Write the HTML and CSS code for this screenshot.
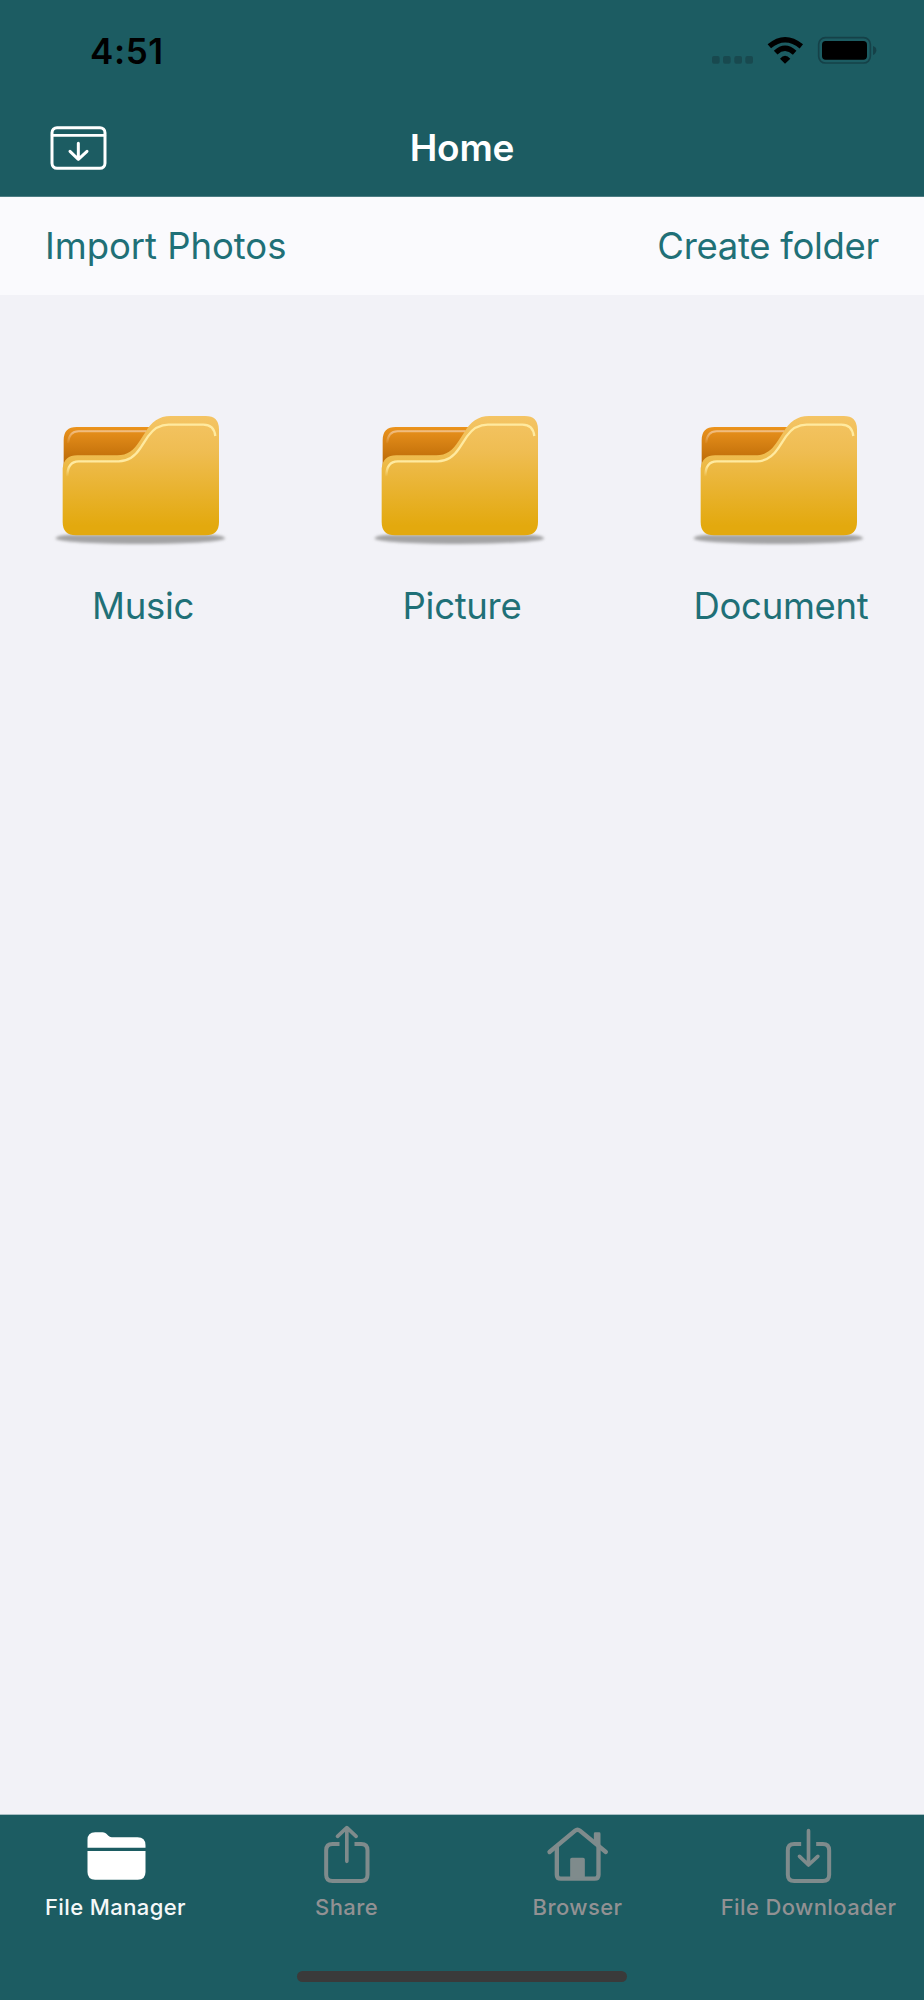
FILE: index.html
```html
<!DOCTYPE html>
<html lang="en">
<head>
<meta charset="UTF-8" />
<title>Home</title>
<link rel="stylesheet" href="styles.css">
</head>
<body>

<header>
  <div class="status">
    <span class="time">4:51</span>
    <svg class="status-icons" viewBox="0 0 510 90">
      <g fill="#18494f">
        <rect x="15" y="63" width="23" height="23" rx="6"/>
        <rect x="48" y="63" width="23" height="23" rx="6"/>
        <rect x="82" y="63" width="23" height="23" rx="6"/>
        <rect x="115" y="63" width="23" height="23" rx="6"/>
      </g>
      <g fill="none" stroke="#000" stroke-width="16">
        <path d="M187 34Q234 -6 283 34"/>
        <path d="M206 53Q234 27 263 53"/>
      </g>
      <path d="M219 71Q234 53 250 71L234 86Z"/>
      <rect x="335" y="8" width="155" height="76" rx="20" fill="none" stroke="#154148" stroke-width="5"/>
      <rect x="345" y="18" width="135" height="56" rx="11"/>
      <path d="M498 33Q508 36 508 46Q508 56 498 60Z" fill="#154148"/>
    </svg>
  </div>
  <div class="nav">
    <svg class="nav-icon" viewBox="0 0 180 140" fill="none" stroke="#fff" stroke-width="9" stroke-linecap="round" stroke-linejoin="round">
      <rect x="12" y="8" width="159" height="122" rx="15"/>
      <path d="M13 31H170" stroke-width="8"/>
      <path d="M91 55V103M66 79L91 103L117 79"/>
    </svg>
    <h1>Home</h1>
  </div>
</header>

<div class="toolbar">
  <a class="import">Import Photos</a>
  <a class="create">Create folder</a>
</div>

<main>
  <svg width="0" height="0" class="defs">
    <defs>
      <linearGradient id="front" x1="0" y1="0" x2="0" y2="1">
        <stop offset="0" stop-color="#f4c464"/>
        <stop offset="0.3" stop-color="#efbd52"/>
        <stop offset="0.92" stop-color="#e3a90e"/>
        <stop offset="1" stop-color="#e3a90e"/>
      </linearGradient>
      <linearGradient id="back" gradientUnits="userSpaceOnUse" x1="0" y1="80" x2="0" y2="190">
        <stop offset="0" stop-color="#ec941c"/>
        <stop offset="0.25" stop-color="#df8918"/>
        <stop offset="0.8" stop-color="#c5720b"/>
        <stop offset="1" stop-color="#bd6b06"/>
      </linearGradient>
      <linearGradient id="shine" gradientUnits="userSpaceOnUse" x1="0" y1="180" x2="0" y2="230">
        <stop offset="0" stop-color="#ffeaa0"/>
        <stop offset="0.35" stop-color="#ffeaa0"/>
        <stop offset="1" stop-color="#ffeaa0" stop-opacity="0"/>
      </linearGradient>
      <linearGradient id="back-shine" gradientUnits="userSpaceOnUse" x1="0" y1="92" x2="0" y2="132">
        <stop offset="0" stop-color="#f1bf85"/>
        <stop offset="1" stop-color="#f1bf85" stop-opacity="0"/>
      </linearGradient>
      <filter id="soft" x="-10%" y="-60%" width="120%" height="220%">
        <feGaussianBlur stdDeviation="4"/>
      </filter>
      <g id="folder">
        <path d="M46 416Q48 406 90 404H510Q554 406 556 416Q530 430 300 432Q70 430 46 416Z" fill="#a3a3a4" filter="url(#soft)"/>
        <path d="M71 200V120Q71 81 110 81H345L330 180H110Z" fill="url(#back)"/>
        <path d="M84 130Q87 94 116 94H320" fill="none" stroke="url(#back-shine)" stroke-width="6"/>
        <path d="M68 205Q72 166 112 166H232C262 166 281 151 299 123L317 95C334 66 357 48 392 48H497Q537 48 537 88V366Q537 406 497 406H108Q68 406 68 366Z" fill="url(#front)"/>
        <path d="M82 230Q82 184 116 184H236C264 184 286 168 302 143L324 109C342 84 360 74 386 74H490Q522 74 526 108" fill="none" stroke="url(#shine)" stroke-width="7"/>
      </g>
    </defs>
  </svg>
  <ul class="folders">
    <li>
      <svg viewBox="9 0 600 450"><use href="#folder"/></svg>
      <span>Music</span>
    </li>
    <li>
      <svg viewBox="9 0 600 450"><use href="#folder"/></svg>
      <span>Picture</span>
    </li>
    <li>
      <svg viewBox="9 0 600 450"><use href="#folder"/></svg>
      <span>Document</span>
    </li>
  </ul>
</main>

<footer>
  <ul class="tabs">
    <li class="active">
      <svg viewBox="226.5 60 240 210" fill="#fff">
        <path d="M261 143V120Q261 97 284 97H306C319 97 323 112 334 112H411Q435 112 435 136V143Z"/>
        <path d="M261 153H435V216Q435 239 412 239H284Q261 239 261 216Z"/>
      </svg>
      <span>File Manager</span>
    </li>
    <li>
      <svg viewBox="199.5 60 240 210" fill="none" stroke="#7f8b8c" stroke-width="12">
        <path d="M297 132H276Q257 132 257 151V224Q257 243 276 243H362Q381 243 381 224V151Q381 132 362 132H342"/>
        <path d="M319 184V84M291 109L319 83L347 109" stroke-linecap="round" stroke-linejoin="round" stroke-width="11"/>
      </svg>
      <span>Share</span>
    </li>
    <li>
      <svg viewBox="172.5 60 240 210" fill="none" stroke="#7f8b8c" stroke-width="13" stroke-linecap="round" stroke-linejoin="round">
        <path d="M207 156L284 92Q291 86 298 92L376 156"/>
        <path d="M229 141V224Q229 236 241 236H342Q354 236 354 224V141" stroke-linecap="butt"/>
        <path d="M340 122V101Q340 97 344 97H356Q360 97 360 101V142ZM269 236V178Q269 173 274 173H308Q313 173 313 178V236Z" fill="#7f8b8c" stroke="none"/>
      </svg>
      <span>Browser</span>
    </li>
    <li>
      <svg viewBox="205.5 60 240 210" fill="none" stroke="#7f8b8c" stroke-width="12">
        <path d="M302 132H281Q262 132 262 151V224Q262 243 281 243H367Q386 243 386 224V151Q386 132 367 132H347"/>
        <path d="M324 92V195M297 169L324 195L352 169" stroke-linecap="round" stroke-linejoin="round" stroke-width="11"/>
      </svg>
      <span>File Downloader</span>
    </li>
  </ul>
  <div class="home-bar"></div>
</footer>

</body>
</html>
```

FILE: styles.css
```css
@charset "utf-8";

* {
    box-sizing: border-box;
}

body {
    margin: 0;
    height: 2000px;
    display: flex;
    flex-direction: column;
    background: #f2f2f7;
    font-family: Inter, "Liberation Sans", sans-serif;
    overflow: hidden;
}

ul {
    list-style: none;
    margin: 0;
    padding: 0;
}

svg {
    display: block;
}

header {
    height: 197px;
    background: #1c5c62;
    border-bottom: 1px solid #4c7d83;
}

.status {
    height: 100px;
    padding: 30px 47px 0 90px;
    display: flex;
    justify-content: space-between;
    align-items: flex-start;
}

.time {
    font-size: 35px;
    font-weight: 600;
    line-height: 42px;
    letter-spacing: 0.6px;
    color: #000;
}

.status-icons {
    width: 170px;
    height: 30px;
    margin-top: 5px;
}

.nav {
    height: 96px;
    padding: 0 48px;
    display: grid;
    grid-template-columns: 60px 1fr 60px;
    align-items: center;
}

.nav-icon {
    width: 60px;
    height: 46.67px;
}

h1 {
    margin: 0;
    color: #fff;
    font-size: 37px;
    font-weight: 600;
    line-height: 46px;
    text-align: center;
    letter-spacing: -0.2px;
}

.toolbar {
    height: 98px;
    padding: 0 45px;
    display: flex;
    justify-content: space-between;
    align-items: center;
    background: #fafafd;
}

.toolbar a,
.folders span {
    color: #1f7077;
    font-size: 36.5px;
    line-height: 46px;
    letter-spacing: -0.3px;
    white-space: nowrap;
}

.toolbar .import {
    letter-spacing: -0.05px;
}

main {
    flex: 1;
    padding: 105px 43px 0;
}

.defs {
    position: absolute;
}

.folders {
    display: flex;
    justify-content: space-between;
}

.folders li {
    width: 200px;
    display: flex;
    flex-direction: column;
    align-items: center;
}

.folders svg {
    width: 200px;
    height: 150px;
}

.folders span {
    margin-top: 33px;
}

footer {
    height: 186px;
    background: #1c5c62;
    border-top: 1px solid #a9bfc4;
}

.tabs {
    display: grid;
    grid-template-columns: repeat(4, 1fr);
    padding-top: 5px;
}

.tabs li {
    display: flex;
    flex-direction: column;
    align-items: center;
    color: #929193;
    font-size: 22px;
    font-weight: 500;
    line-height: 28px;
    letter-spacing: 0.4px;
    white-space: nowrap;
}

.tabs .active {
    color: #f5f8f8;
}

.tabs svg {
    width: 80px;
    height: 70px;
}

.tabs span {
    margin-top: 3px;
}

.home-bar {
    width: 330px;
    height: 11px;
    margin: 50px auto 0;
    border-radius: 6px;
    background: #3a3a3a;
}
```
